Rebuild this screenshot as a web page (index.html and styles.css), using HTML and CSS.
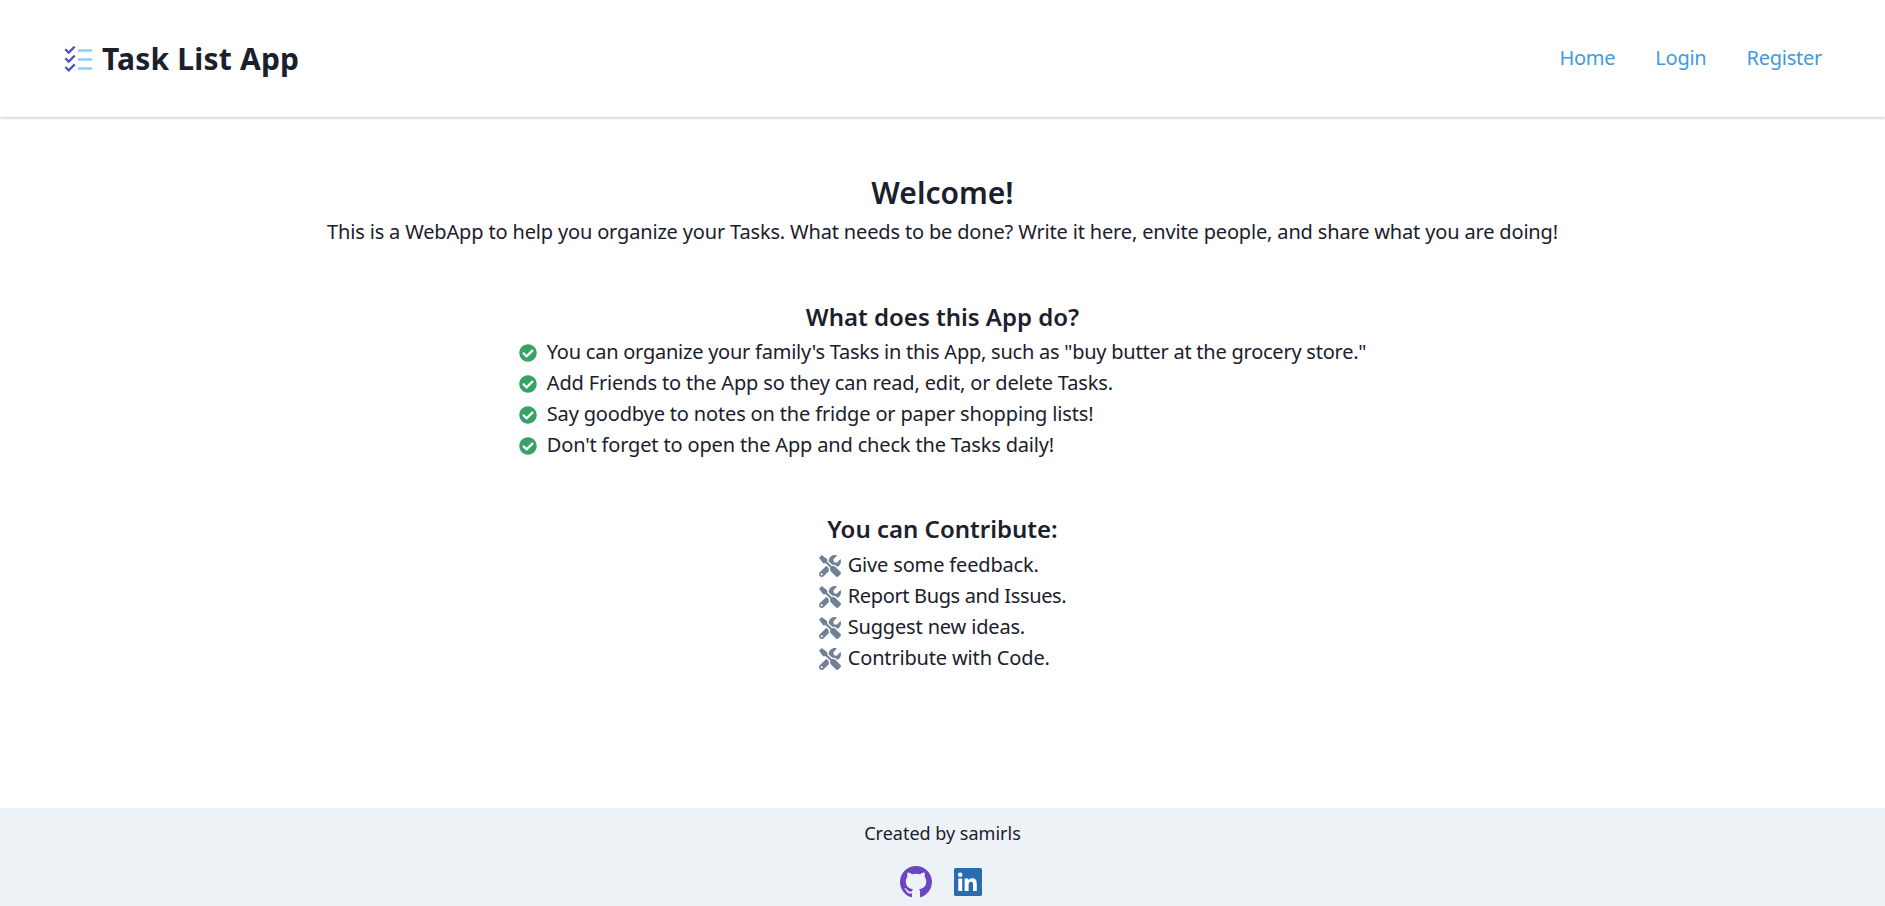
FILE: index.html
```html
<!DOCTYPE html>
<html lang="en">
<head>
<meta charset="utf-8">
<title>Task List App</title>
<link rel="stylesheet" href="styles.css">
</head>
<body>
<div class="page">
<svg class="sprites" width="0" height="0">
  <defs>
    <path id="check" fill="#38a169" d="M504 256c0 136.967-111.033 248-248 248S8 392.967 8 256 119.033 8 256 8s248 111.033 248 248zM227.314 387.314l184-184c6.248-6.248 6.248-16.379 0-22.627l-22.627-22.627c-6.248-6.249-16.379-6.249-22.628 0L216 308.118l-70.059-70.059c-6.248-6.248-16.379-6.248-22.628 0l-22.627 22.627c-6.248 6.248-6.248 16.379 0 22.627l104 104c6.249 6.25 16.379 6.25 22.628.001z"/>
    <path id="tools" fill="#718096" d="M501.1 395.7L384 278.6c-23.1-23.1-57.6-27.6-85.4-13.9L192 158.1V96L64 0 0 64l96 128h62.1l106.6 106.6c-13.6 27.8-9.2 62.3 13.9 85.4l117.1 117.1c14.6 14.6 38.2 14.6 52.7 0l52.7-52.7c14.5-14.6 14.5-38.2 0-52.7zM331.7 225c28.3 0 54.9 11 74.9 31l19.4 19.4c15.8-6.9 30.8-16.5 43.8-29.5 37.1-37.1 49.7-89.3 37.9-136.7-2.2-9-13.5-12.1-20.1-5.5l-74.4 74.4-67.9-11.3L334 98.9l74.4-74.4c6.6-6.6 3.4-17.9-5.7-20.2-47.4-11.7-99.6.9-136.6 37.9-28.5 28.5-41.9 66.1-41.2 103.6l82.1 82.1c8.1-1.9 16.5-2.9 24.7-2.9zm-103.9 82l-56.7-56.7L18.7 402.8c-25 25-25 65.5 0 90.5s65.5 25 90.5 0l123.6-123.6c-7.6-19.9-9.9-41.6-5-62.7zM64 472c-13.2 0-24-10.8-24-24 0-13.3 10.7-24 24-24s24 10.7 24 24c0 13.2-10.7 24-24 24z"/>
  </defs>
</svg>
<header class="header">
  <a class="brand">
    <svg class="brand-icon" viewBox="0 0 28 26" width="28" height="26" fill="none">
      <path d="M1.3 3.2l3.4 3.4 6-6M1.3 12.2l3.4 3.4 6-6M1.3 21l3.4 3.4 6-6" stroke="#4c51bf" stroke-width="2.2"/>
      <path d="M14 4.5h14M14 13.5h14M14 22.5h14" stroke="#90cdf4" stroke-width="2.7"/>
    </svg>
    <span>Task List App</span>
  </a>
  <nav class="nav"><a>Home</a><a>Login</a><a>Register</a></nav>
</header>
<main class="main">
  <section class="intro">
    <h1>Welcome!</h1>
    <p>This is a WebApp to help you organize your Tasks. What needs to be done? Write it here, envite people, and share what you are doing!</p>
  </section>
  <section class="block">
    <h2>What does this App do?</h2>
    <ul class="list">
      <li class="tight"><svg class="ico" viewBox="0 0 512 512"><use href="#check"/></svg>You can organize your family's Tasks in this App, such as "buy butter at the grocery store."</li>
      <li><svg class="ico" viewBox="0 0 512 512"><use href="#check"/></svg>Add Friends to the App so they can read, edit, or delete Tasks.</li>
      <li><svg class="ico" viewBox="0 0 512 512"><use href="#check"/></svg>Say goodbye to notes on the fridge or paper shopping lists!</li>
      <li><svg class="ico" viewBox="0 0 512 512"><use href="#check"/></svg>Don't forget to open the App and check the Tasks daily!</li>
    </ul>
  </section>
  <section class="block contribute">
    <h2>You can Contribute:</h2>
    <ul class="list">
      <li><svg class="ico tool" viewBox="0 0 512 512"><use href="#tools"/></svg>Give some feedback.</li>
      <li class="tighter"><svg class="ico tool" viewBox="0 0 512 512"><use href="#tools"/></svg>Report Bugs and Issues.</li>
      <li><svg class="ico tool" viewBox="0 0 512 512"><use href="#tools"/></svg>Suggest new ideas.</li>
      <li><svg class="ico tool" viewBox="0 0 512 512"><use href="#tools"/></svg>Contribute with Code.</li>
    </ul>
  </section>
</main>
<footer class="footer">
  <p>Created by samirls</p>
  <div class="social">
    <svg viewBox="0 0 16 16" width="32" height="32"><path fill="#6b46c1" d="M8 0C3.58 0 0 3.58 0 8c0 3.54 2.29 6.53 5.47 7.59.4.07.55-.17.55-.38 0-.19-.01-.82-.01-1.49-2.01.37-2.53-.49-2.69-.94-.09-.23-.48-.94-.82-1.13-.28-.15-.68-.52-.01-.53.63-.01 1.08.58 1.23.82.72 1.21 1.87.87 2.33.66.07-.52.28-.87.51-1.07-1.78-.2-3.64-.89-3.64-3.95 0-.87.31-1.59.82-2.15-.08-.2-.36-1.02.08-2.12 0 0 .67-.21 2.2.82.64-.18 1.32-.27 2-.27s1.36.09 2 .27c1.53-1.04 2.2-.82 2.2-.82.44 1.1.16 1.92.08 2.12.51.56.82 1.27.82 2.15 0 3.07-1.87 3.75-3.65 3.95.29.25.54.73.54 1.48 0 1.07-.01 1.93-.01 2.2 0 .21.15.46.55.38A8.01 8.01 0 0 0 16 8c0-4.42-3.58-8-8-8z"/></svg>
    <svg viewBox="0 0 28 28" width="28" height="28"><rect width="28" height="28" rx="1.5" fill="#2b6cb0"/><path fill="#fff" d="M4.3 10.5h3.9V23H4.3zM6.2 4.5a2.25 2.25 0 1 1 0 4.5 2.25 2.25 0 0 1 0-4.5zM10.6 10.5h3.7v1.7h.1c.5-1 1.8-2 3.7-2 4 0 4.7 2.6 4.7 6V23H19v-6c0-1.4 0-3.3-2-3.3s-2.4 1.6-2.4 3.2V23h-4z"/></svg>
  </div>
</footer>
</div>
</body>
</html>
```

FILE: styles.css
```css
* { box-sizing: border-box; }
html, body { margin: 0; padding: 0; }
body {
  font-family: "Noto Sans", "Open Sans", sans-serif;
  color: #1a202c;
  background: #fff;
  font-size: 20px;
  line-height: 1.5;
}
.page { height: 906px; display: flex; flex-direction: column; overflow: hidden; }
.sprites { display: block; height: 0; }
.header {
  height: 117px;
  flex: none;
  display: flex;
  align-items: center;
  justify-content: space-between;
  padding: 0 63px 0 64px;
  box-shadow: 0 1px 3px rgba(0,0,0,.1), 0 1px 2px rgba(0,0,0,.06), 0 2px 4px rgba(0,0,0,.06);
}
.brand { display: flex; align-items: center; gap: 10px; font-size: 30px; font-weight: 700; letter-spacing: .2px; }
.brand-icon { display: block; }
.nav { display: flex; gap: 40px; margin-bottom: 2px; letter-spacing: -.25px; }
.nav a { color: #4299e1; font-size: 20px; }
.main { flex: 1; display: flex; flex-direction: column; align-items: center; padding-top: 52px; }
.intro { text-align: center; }
h1 { margin: 0; font-size: 30px; line-height: 48px; font-weight: 600; }
.intro p { margin: 0; letter-spacing: -.163px; }
.block { display: flex; flex-direction: column; align-items: center; margin-top: 52px; }
.contribute { margin-top: 51px; }
h2 { margin: 0; font-size: 24px; line-height: 36px; font-weight: 600; }
.list { list-style: none; margin: 1px 0 0; padding: 0; letter-spacing: -.163px; }
.contribute .list { margin-top: 2px; }
.list li { display: flex; align-items: center; height: 31px; }
.list .tight { letter-spacing: -.24px; }
.list .tighter { letter-spacing: -.36px; }
.ico { width: 18px; height: 18px; margin: 2px 10px 0 0; flex: none; }
.tool { width: 22px; height: 22px; margin: 2px 7px 0 0; }
.footer {
  height: 98px;
  flex: none;
  background: #edf2f7;
  display: flex;
  flex-direction: column;
  align-items: center;
  padding-top: 12px;
}
.footer p { margin: 0; font-size: 18px; line-height: 27px; }
.social { display: flex; align-items: center; gap: 22px; margin: 19px 3px 0 0; }
.social svg { display: block; }
```
